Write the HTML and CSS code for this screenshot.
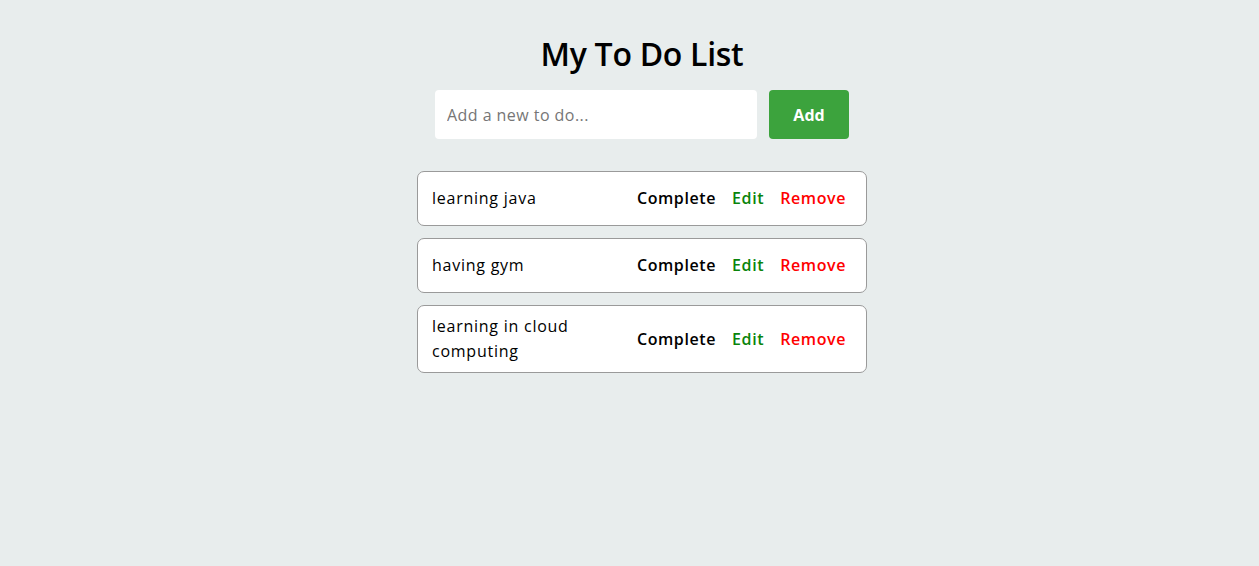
FILE: index.html
```html
<!DOCTYPE html>
<html lang="en">
<head>
<meta charset="utf-8">
<title>My To Do List</title>
<link rel="stylesheet" href="styles.css">
</head>
<body>
<main class="app">
  <h1 class="title">My To Do List</h1>
  <form class="add-form" onsubmit="return false">
    <input class="add-input" type="text" placeholder="Add a new to do...">
    <button class="add-btn" type="submit">Add</button>
  </form>
  <ul class="todo-list">
    <li class="todo-item">
      <span class="todo-text">learning java</span>
      <div class="todo-actions">
        <button class="act act-complete">Complete</button>
        <button class="act act-edit">Edit</button>
        <button class="act act-remove">Remove</button>
      </div>
    </li>
    <li class="todo-item">
      <span class="todo-text">having gym</span>
      <div class="todo-actions">
        <button class="act act-complete">Complete</button>
        <button class="act act-edit">Edit</button>
        <button class="act act-remove">Remove</button>
      </div>
    </li>
    <li class="todo-item">
      <span class="todo-text">learning in cloud computing</span>
      <div class="todo-actions">
        <button class="act act-complete">Complete</button>
        <button class="act act-edit">Edit</button>
        <button class="act act-remove">Remove</button>
      </div>
    </li>
  </ul>
</main>
</body>
</html>
```
FILE: styles.css
```css
* { box-sizing: border-box; }
html, body { margin: 0; padding: 0; }
body {
  background: #e8eded;
  font-family: "Open Sans", "Liberation Sans", sans-serif;
  color: #000;
  min-height: 566px;
}
.app {
  display: flex;
  flex-direction: column;
  align-items: center;
  padding-top: 34px;
  padding-left: 25px;
}
.title {
  margin: 0;
  font-size: 32px;
  line-height: 40px;
  font-weight: 600;
  letter-spacing: -0.3px;
}
.add-form {
  display: flex;
  gap: 12px;
  margin-top: 16px;
}
.add-input {
  width: 322px;
  height: 49px;
  border: none;
  border-radius: 4px;
  background: #fff;
  padding: 0 12px;
  font-family: inherit;
  font-size: 16px;
  letter-spacing: 0.45px;
  color: #000;
  outline: none;
}
.add-input::placeholder { color: #767676; }
.add-btn {
  width: 80px;
  height: 49px;
  border: none;
  border-radius: 4px;
  background: #3ca33d;
  color: #fff;
  font-family: inherit;
  font-size: 16px;
  font-weight: 700;
  cursor: pointer;
}
.todo-list {
  list-style: none;
  margin: 32px 0 0;
  padding: 0;
  width: 450px;
  display: flex;
  flex-direction: column;
  gap: 12px;
}
.todo-item {
  display: flex;
  align-items: center;
  justify-content: space-between;
  gap: 12px;
  background: #fff;
  border: 1px solid #9a9a9a;
  border-radius: 7px;
  padding: 8px 12px 8px 14px;
}
.todo-text {
  font-size: 16px;
  line-height: 25px;
  letter-spacing: 0.75px;
  flex: 1;
  max-width: 185px;
}
.todo-actions {
  display: flex;
  flex-shrink: 0;
}
.act {
  border: none;
  background: none;
  padding: 6px 8px;
  font-family: inherit;
  font-size: 16px;
  line-height: 25px;
  font-weight: 600;
  letter-spacing: 0.6px;
  cursor: pointer;
}
.act-complete { color: #000; }
.act-edit { color: #0a840a; }
.act-remove { color: #ff0000; }
```
